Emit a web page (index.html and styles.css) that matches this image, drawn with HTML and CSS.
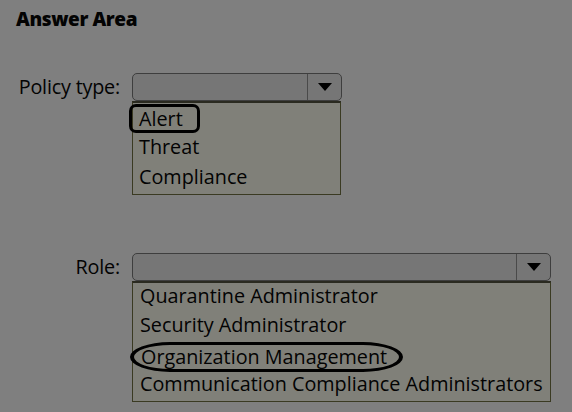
FILE: index.html
```html
<!DOCTYPE html>
<html lang="en">
<head>
    <meta charset="UTF-8">
    <title>Answer Area</title>
    <link rel="stylesheet" href="styles.css">
</head>
<body>
    <div class="answer-area">
        <h2 class="title">Answer Area</h2>

        <div class="field policy">
            <div class="label">Policy type:</div>
            <div class="control">
                <div class="select">
                    <div class="select-value"></div>
                    <div class="select-arrow"><span class="caret"></span></div>
                </div>
                <ul class="options">
                    <li><span class="picked picked-box">Alert</span></li>
                    <li>Threat</li>
                    <li>Compliance</li>
                </ul>
            </div>
        </div>

        <div class="field role">
            <div class="label">Role:</div>
            <div class="control">
                <div class="select">
                    <div class="select-value"></div>
                    <div class="select-arrow"><span class="caret"></span></div>
                </div>
                <ul class="options">
                    <li>Quarantine Administrator</li>
                    <li>Security Administrator</li>
                    <li><span class="picked picked-oval">Organization Management</span></li>
                    <li>Communication Compliance Administrators</li>
                </ul>
            </div>
        </div>
    </div>
</body>
</html>
```

FILE: styles.css
```css
* {
    margin: 0;
    padding: 0;
    box-sizing: border-box;
}

body {
    background-color: #7f7f7f;
    color: #030303;
    font-family: 'Open Sans', 'Noto Sans', sans-serif;
    width: 572px;
    height: 412px;
    overflow: hidden;
}

.answer-area {
    padding: 7px 0 0 16px;
}

.title {
    font-size: 19px;
    font-weight: 800;
    letter-spacing: -0.4px;
    line-height: 24px;
    height: 24px;
}

.field {
    display: flex;
    gap: 12px;
}

.policy {
    margin-top: 42px;
}

.role {
    margin-top: 58px;
}

.label {
    width: 104px;
    text-align: right;
    font-size: 19.8px;
    font-weight: 500;
    letter-spacing: -0.2px;
    line-height: 27px;
}

.select {
    display: flex;
    height: 28px;
    border: 1px solid #3e3e3e;
    border-radius: 5px;
    background: #767676;
}

.policy .control {
    width: 210px;
}

.role .control {
    width: 419px;
}

.select-value {
    flex: 1;
}

.select-arrow {
    width: 34px;
    border-left: 1px solid #4a4a4a;
    display: flex;
    align-items: center;
    justify-content: center;
}

.caret {
    width: 0;
    height: 0;
    border-left: 7px solid transparent;
    border-right: 7px solid transparent;
    border-top: 8px solid #000;
}

.options {
    list-style: none;
    border: 1px solid #3a3a22;
    border-top: 2px solid #2a2a20;
    background: #808079;
    font-size: 19.8px;
    font-weight: 500;
}

.policy .options {
    width: 209px;
    padding: 0 0 1px 0;
}

.policy .options li {
    height: 30px;
    line-height: 28px;
    padding-left: 6px;
}

.role .options {
    width: 419px;
}

.role .options li {
    height: 29.4px;
    line-height: 26px;
    padding-left: 7px;
}

.picked {
    display: inline-block;
    vertical-align: top;
    border: 3px solid #000;
    margin-left: -10px;
    padding: 0 7px;
    line-height: 23px;
}

.picked-box {
    border-radius: 7px;
    width: 71px;
    margin-top: 1px;
}

.picked-oval {
    border-radius: 40px / 15px;
    border-width: 3px 4px;
    padding: 0 8px 0 7px;
    width: 273px;
    line-height: 24px;
}
```
